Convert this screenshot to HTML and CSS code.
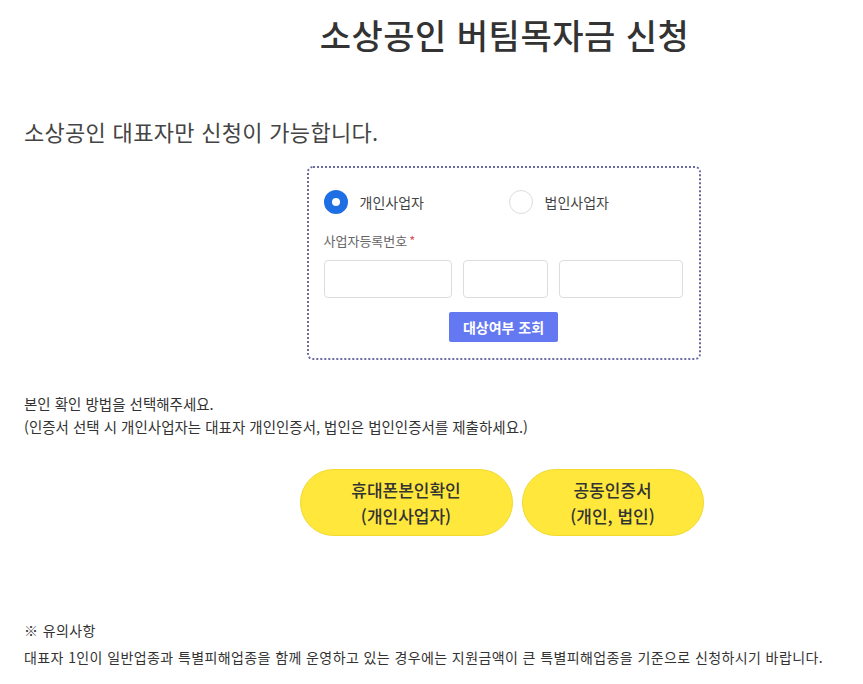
FILE: index.html
```html
<!DOCTYPE html>
<html lang="ko">
<head>
<meta charset="utf-8">
<link rel="stylesheet" href="styles.css">
</head>
<body>
<div class="page">
  <h1 class="title">소상공인 버팀목자금 신청</h1>
  <p class="lead">소상공인 대표자만 신청이 가능합니다.</p>
  <div class="center">
    <div class="box">
      <div class="radios">
        <label class="radio"><span class="dot on"></span><span>개인사업자</span></label>
        <label class="radio"><span class="dot"></span><span>법인사업자</span></label>
      </div>
      <div class="field-label">사업자등록번호<span class="req">*</span></div>
      <div class="inputs">
        <input class="inp inp1" type="text">
        <input class="inp inp2" type="text">
        <input class="inp inp3" type="text">
      </div>
      <div class="btn-row"><button class="check-btn">대상여부 조회</button></div>
    </div>
  </div>
  <p class="info">본인 확인 방법을 선택해주세요.<br>(인증서 선택 시 개인사업자는 대표자 개인인증서, 법인은 법인인증서를 제출하세요.)</p>
  <div class="center choices">
    <button class="pill pill1">휴대폰본인확인<br>(개인사업자)</button>
    <button class="pill pill2">공동인증서<br>(개인, 법인)</button>
  </div>
  <div class="notes">
    <p>※ 유의사항</p>
    <p>대표자 1인이 일반업종과 특별피해업종을 함께 운영하고 있는 경우에는 지원금액이 큰 특별피해업종을 기준으로 신청하시기 바랍니다.</p>
  </div>
</div>
</body>
</html>
```
FILE: styles.css
```css
* { box-sizing: border-box; }
html, body { margin: 0; padding: 0; background: #fff; }
body {
  font-family: "Noto Sans CJK KR", "Noto Sans", sans-serif;
  color: #333;
}
.page { padding: 0 24px; }
.title {
  margin: 0;
  padding: 10px 0 0 146px;
  text-align: center;
  font-size: 34px;
  font-weight: 500;
  line-height: 50px;
  color: #333;
  letter-spacing: 0.5px;
}
.lead {
  margin: 56px 0 0;
  font-size: 22px;
  line-height: 30px;
  color: #444;
  font-weight: 400;
  letter-spacing: 0.3px;
}
.center {
  display: flex;
  justify-content: center;
  padding-left: 144px;
}
.box {
  margin-top: 20px;
  width: 394px;
  border: 2px dotted #6a6aa3;
  border-radius: 6px;
  padding: 22px 15px 16px 15px;
}
.radios {
  display: grid;
  grid-template-columns: 185px 1fr;
  align-items: center;
}
.radio {
  display: flex;
  align-items: center;
  gap: 12px;
  font-size: 14px;
  color: #444;
}
.dot {
  width: 24px;
  height: 24px;
  border-radius: 50%;
  border: 1px solid #ddd;
  background: #fff;
}
.dot.on {
  border: 8px solid #1e6fe3;
}
.field-label {
  margin-top: 17px;
  font-size: 13px;
  line-height: 20px;
  color: #666;
}
.req { color: #e05555; margin-left: 2px; }
.inputs {
  margin-top: 9px;
  display: flex;
  gap: 11px;
}
.inp {
  height: 38px;
  border: 1px solid #ddd;
  border-radius: 4px;
  background: #fff;
  padding: 0;
}
.inp1 { width: 128px; }
.inp2 { width: 85px; }
.inp3 { width: 124px; }
.btn-row {
  margin-top: 14px;
  display: flex;
  justify-content: center;
}
.check-btn {
  width: 109px;
  height: 30px;
  border: none;
  border-radius: 2px;
  background: #6479f1;
  color: #fff;
  font-family: inherit;
  font-size: 14px;
  font-weight: 700;
  padding: 0;
}
.info {
  margin: 32px 0 0;
  font-size: 14.5px;
  line-height: 23px;
  color: #333;
}
.choices {
  margin-top: 31px;
  gap: 9px;
  padding-left: 140px;
}
.pill {
  height: 67px;
  border-radius: 34px;
  border: 1px solid #f1d92e;
  background: #ffe83b;
  color: #333;
  font-family: inherit;
  font-size: 17px;
  line-height: 26px;
  font-weight: 500;
  padding: 0;
}
.pill1 { width: 213px; }
.pill2 { width: 182px; }
.notes {
  margin-top: 81px;
  font-size: 14px;
  letter-spacing: 0.4px;
  color: #333;
}
.notes p { margin: 0; line-height: 27px; }
```
